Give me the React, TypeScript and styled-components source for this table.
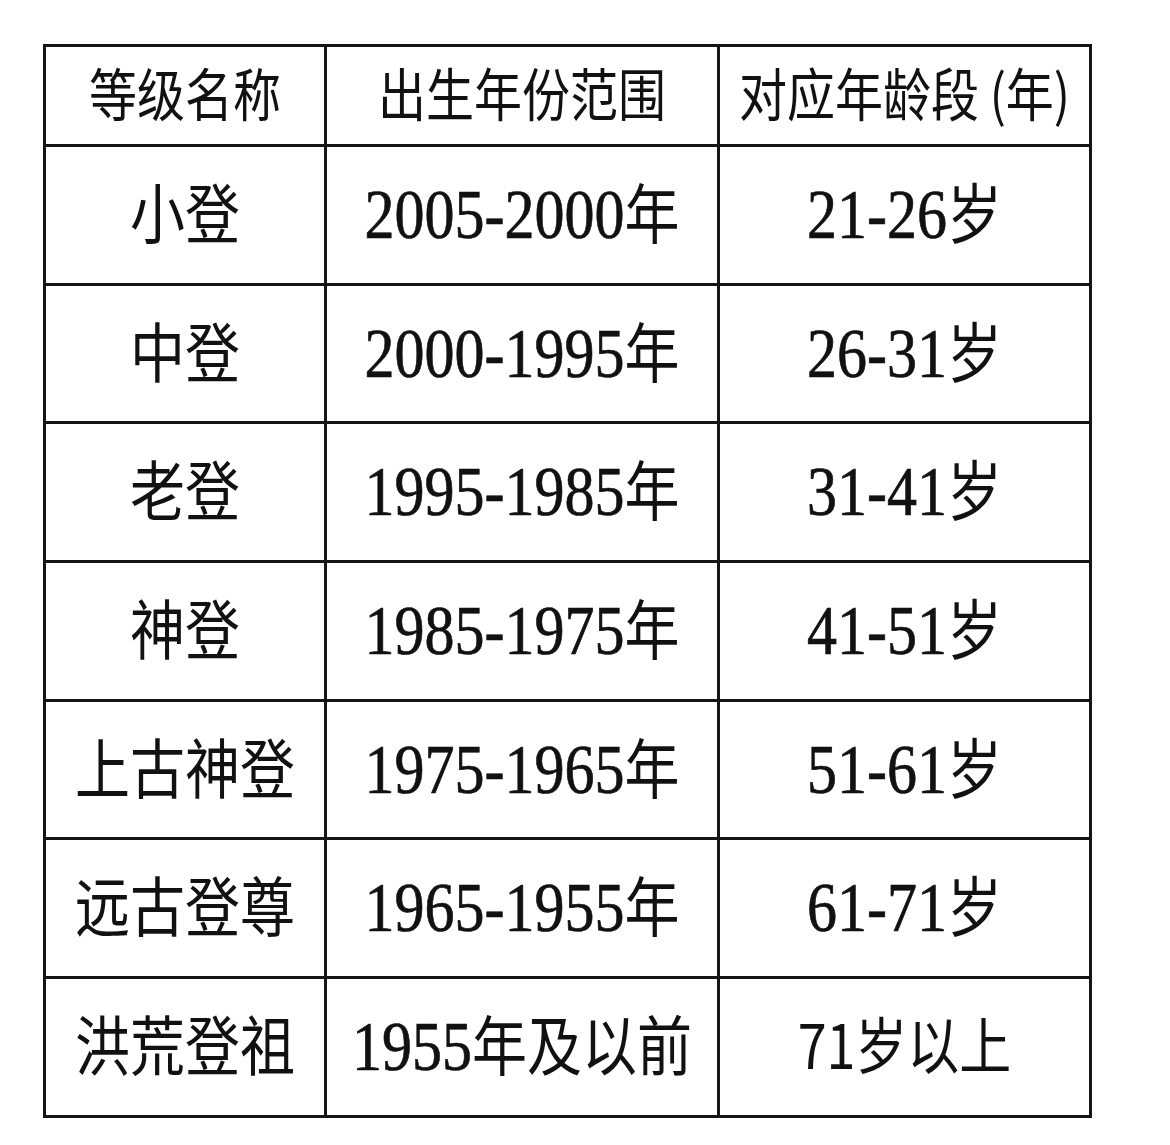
import React from "react";
import styled, { createGlobalStyle } from "styled-components";

const GlobalStyle = createGlobalStyle`
  html, body {
    margin: 0;
    padding: 0;
    background: #ffffff;
  }
`;

const Page = styled.div`
  padding: 44px 0 0 43px;
  width: 1170px;
  height: 1145px;
  box-sizing: border-box;
`;

const Grid = styled.div`
  display: grid;
  grid-template-columns: 281px 393px 372px;
  grid-template-rows: 100px 139px 138px 139px 139px 138px 139px 139px;
  width: max-content;
  border-top: 3px solid #151515;
  border-left: 3px solid #151515;
`;

const Cell = styled.div<{ $head?: boolean }>`
  display: flex;
  align-items: center;
  justify-content: center;
  border-right: 3px solid #151515;
  border-bottom: 3px solid #151515;
  color: #111;
  font-family: ${(p) =>
    p.$head
      ? `"Noto Sans CJK SC", sans-serif`
      : `"Liberation Serif", "Noto Sans CJK SC", serif`};
  font-size: ${(p) => (p.$head ? "48px" : "60px")};
  white-space: nowrap;
  > span {
    display: inline-block;
    transform: translateY(-5px) scaleY(1.18);
    -webkit-text-stroke: 0.6px #111;
  }
  .cjk {
    font-family: "Noto Sans CJK SC", sans-serif;
    font-size: ${(p) => (p.$head ? "48px" : "55px")};
    -webkit-text-stroke: 0;
  }
  .sans {
    font-family: "Noto Sans CJK SC", sans-serif;
    font-size: 52px;
    -webkit-text-stroke: 0;
  }
`;

const rows = [
  ["小登", "2005-2000", "21-26"],
  ["中登", "2000-1995", "26-31"],
  ["老登", "1995-1985", "31-41"],
  ["神登", "1985-1975", "41-51"],
  ["上古神登", "1975-1965", "51-61"],
  ["远古登尊", "1965-1955", "61-71"],
];

export default function App() {
  return (
    <Page>
      <GlobalStyle />
      <Grid>
        <Cell $head>
          <span className="cjk">等级名称</span>
        </Cell>
        <Cell $head>
          <span className="cjk">出生年份范围</span>
        </Cell>
        <Cell $head>
          <span className="cjk">对应年龄段 (年)</span>
        </Cell>
        {rows.map(([name, years, ages]) => (
          <React.Fragment key={name}>
            <Cell>
              <span className="cjk">{name}</span>
            </Cell>
            <Cell>
              <span>
                {years}
                <span className="cjk">年</span>
              </span>
            </Cell>
            <Cell>
              <span>
                {ages}
                <span className="cjk">岁</span>
              </span>
            </Cell>
          </React.Fragment>
        ))}
        <Cell>
          <span className="cjk">洪荒登祖</span>
        </Cell>
        <Cell>
          <span>
            1955
            <span className="cjk">年及以前</span>
          </span>
        </Cell>
        <Cell>
          <span className="sans">71岁以上</span>
        </Cell>
      </Grid>
    </Page>
  );
}
